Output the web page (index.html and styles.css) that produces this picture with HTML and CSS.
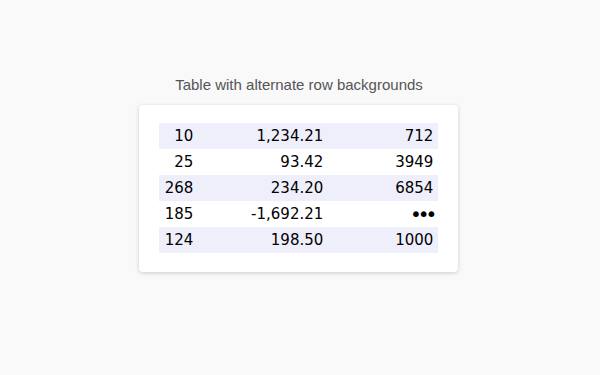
FILE: index.html
```html
<!DOCTYPE html>
<html>
<head>
<meta charset="utf-8">
<link rel="stylesheet" href="styles.css">
</head>
<body>
<div class="page">
  <div class="caption">Table with alternate row backgrounds</div>
  <div class="card">
    <table class="data">
      <tbody>
        <tr><td class="c1">10</td><td class="c2">1,234.21</td><td class="c3">712</td></tr>
        <tr><td class="c1">25</td><td class="c2">93.42</td><td class="c3">3949</td></tr>
        <tr><td class="c1">268</td><td class="c2">234.20</td><td class="c3">6854</td></tr>
        <tr><td class="c1">185</td><td class="c2">-1,692.21</td><td class="c3"><span class="dots">&#x2022;&#x2022;&#x2022;</span></td></tr>
        <tr><td class="c1">124</td><td class="c2">198.50</td><td class="c3">1000</td></tr>
      </tbody>
    </table>
  </div>
</div>
</body>
</html>
```
FILE: styles.css
```css
html, body {
  margin: 0;
  padding: 0;
  background: #f9f9f9;
}
.page {
  width: 600px;
  height: 375px;
  display: flex;
  flex-direction: column;
  align-items: center;
  padding-top: 76px;
  box-sizing: border-box;
}
.caption {
  font-family: "Liberation Sans", Arial, sans-serif;
  font-size: 15px;
  color: #555;
  line-height: 18px;
  margin-bottom: 11px;
  margin-left: -2px;
}
.card {
  background: #fff;
  border-radius: 4px;
  box-shadow: 0 1px 4px rgba(0,0,0,0.18);
  padding: 18px 20px 19px 20px;
  margin-right: 3px;
}
.data {
  border-collapse: collapse;
  font-family: "DejaVu Sans", Verdana, sans-serif;
  font-size: 15px;
  color: #000;
}
.data td {
  height: 26px;
  padding: 0 5px 0 6px;
  text-align: right;
  box-sizing: border-box;
}
.data tr:nth-child(odd) td {
  background: #efeffc;
}
.c1 { width: 34px; }
.c2 { width: 130px; }
.c3 { width: 110px; }
.dots {
  font-size: 20px;
  line-height: 1;
  letter-spacing: -4px;
}
```
